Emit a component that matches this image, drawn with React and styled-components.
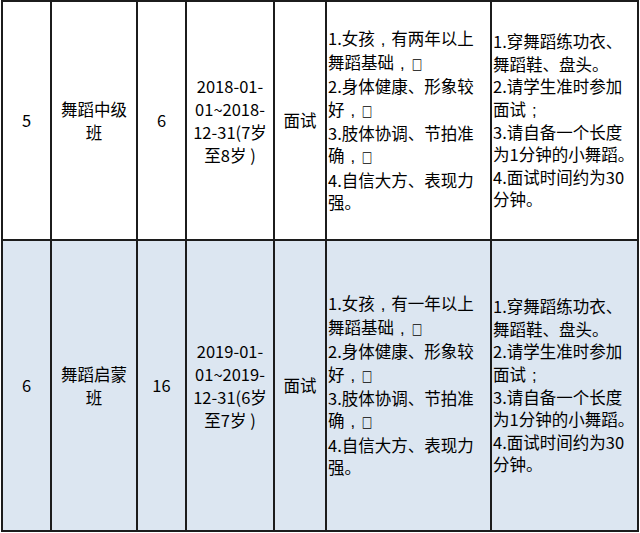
import React from 'react';
import styled, { createGlobalStyle } from 'styled-components';

const GlobalStyle = createGlobalStyle`
  html, body {
    margin: 0;
    padding: 0;
    background: #ffffff;
  }
  body {
    font-family: "Noto Sans CJK SC", "Noto Sans", sans-serif;
    color: #000;
  }
`;

// ',' and ';' stand for centred full-width punctuation, '#' for the missing-glyph box
const requireLines = (years) => [
  `1.女孩,有${years}以上`,
  '舞蹈基础,#',
  '2.身体健康、形象较',
  '好,#',
  '3.肢体协调、节拍准',
  '确,#',
  '4.自信大方、表现力',
  '强。',
];

const notes = [
  '1.穿舞蹈练功衣、',
  '舞蹈鞋、盘头。',
  '2.请学生准时参加',
  '面试;',
  '3.请自备一个长度',
  '为1分钟的小舞蹈。',
  '4.面试时间约为30',
  '分钟。',
];

const rows = [
  {
    no: '5',
    name: ['舞蹈中级', '班'],
    count: '6',
    birth: ['2018-01-', '01~2018-', '12-31(7岁', '至8岁 )'],
    mode: '面试',
    require: requireLines('两年'),
    notes,
    shaded: false,
    height: 237,
  },
  {
    no: '6',
    name: ['舞蹈启蒙', '班'],
    count: '16',
    birth: ['2019-01-', '01~2019-', '12-31(6岁', '至7岁 )'],
    mode: '面试',
    require: requireLines('一年'),
    notes,
    shaded: true,
    height: 289,
  },
];

const renderText = (t) =>
  t.split(/([,;#])/).map((part, i) => {
    if (part === ',' || part === ';') return <Punct key={i}>{part}</Punct>;
    if (part === '#') return <Tofu key={i}>□</Tofu>;
    return part;
  });

const Lines = ({ items }) =>
  items.map((t, i) => <Line key={i}>{renderText(t)}</Line>);

const App = () => {
  return (
    <>
      <GlobalStyle />
      <Sheet>
        {rows.map((r) => (
          <React.Fragment key={r.no}>
            <Cell $shaded={r.shaded} $h={r.height}>{r.no}</Cell>
            <Cell $shaded={r.shaded} $h={r.height}><Lines items={r.name} /></Cell>
            <Cell $shaded={r.shaded} $h={r.height}>{r.count}</Cell>
            <Cell $shaded={r.shaded} $h={r.height} $lh={23}><Lines items={r.birth} /></Cell>
            <Cell $shaded={r.shaded} $h={r.height}>{r.mode}</Cell>
            <Cell $shaded={r.shaded} $h={r.height} $left><Lines items={r.require} /></Cell>
            <Cell $shaded={r.shaded} $h={r.height} $left><Lines items={r.notes} /></Cell>
          </React.Fragment>
        ))}
      </Sheet>
    </>
  );
};

export default App;

const Sheet = styled.div`
  display: grid;
  grid-template-columns: 47px 84px 47px 86px 50px 163px 145px;
  gap: 2px;
  padding: 2px;
  margin-left: 1px;
  width: fit-content;
  background: #1c1c1c;
`;

const Cell = styled.div`
  height: ${(p) => p.$h}px;
  background: ${(p) => (p.$shaded ? '#dce6f1' : '#ffffff')};
  display: flex;
  flex-direction: column;
  justify-content: center;
  align-items: ${(p) => (p.$left ? 'flex-start' : 'center')};
  text-align: ${(p) => (p.$left ? 'left' : 'center')};
  padding-left: ${(p) => (p.$left ? '1px' : '0')};
  font-size: 16.5px;
  line-height: ${(p) => (p.$lh ? p.$lh : 22.4)}px;
  color: #000;
  box-sizing: border-box;
  overflow: hidden;
`;

const Line = styled.div`
  white-space: nowrap;
`;

const Punct = styled.span`
  display: inline-block;
  width: 1em;
  text-align: center;
  font-family: "Liberation Sans", sans-serif;
`;

const Tofu = styled.span`
  display: inline-block;
  margin-left: 1px;
  font-family: "DejaVu Sans", sans-serif;
  font-size: 15px;
  transform: scaleX(0.72);
  transform-origin: left center;
`;
